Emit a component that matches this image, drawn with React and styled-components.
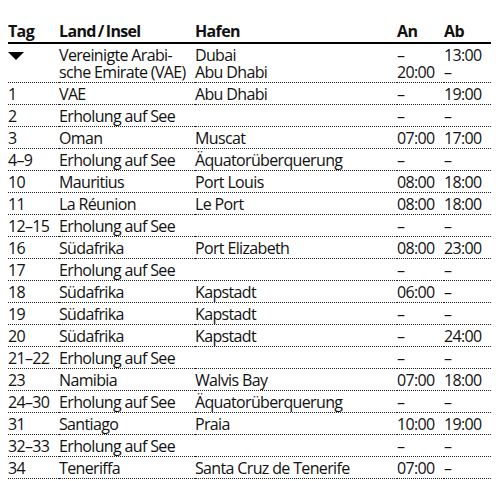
import React from "react";
import styled, { createGlobalStyle } from "styled-components";

const GlobalStyle = createGlobalStyle`
  body {
    margin: 8px;
    background: #fff;
  }
`;

const Table = styled.table`
  width: 483px;
  border-collapse: collapse;
  table-layout: fixed;
  font-family: "Open Sans", "Noto Sans", sans-serif;
  font-size: 16px;
  letter-spacing: -0.65px;
  color: #111;
`;

const HeadCell = styled.th`
  text-align: left;
  font-weight: 700;
  line-height: 20px;
  padding: 13px 0 1px;
  border-bottom: 2px solid #000;
  white-space: nowrap;
`;

const Cell = styled.td`
  vertical-align: top;
  line-height: 17px;
  padding: 3px 0 1px;
  border-bottom: 1px dotted #222;
  white-space: nowrap;
`;

const Marker = styled.svg`
  display: block;
  margin-top: 5px;
`;

const rows = [
  ["1", "VAE", "Abu Dhabi", "–", "19:00"],
  ["2", "Erholung auf See", "", "–", "–"],
  ["3", "Oman", "Muscat", "07:00", "17:00"],
  ["4–9", "Erholung auf See", "Äquatorüberquerung", "–", "–"],
  ["10", "Mauritius", "Port Louis", "08:00", "18:00"],
  ["11", "La Réunion", "Le Port", "08:00", "18:00"],
  ["12–15", "Erholung auf See", "", "–", "–"],
  ["16", "Südafrika", "Port Elizabeth", "08:00", "23:00"],
  ["17", "Erholung auf See", "", "–", "–"],
  ["18", "Südafrika", "Kapstadt", "06:00", "–"],
  ["19", "Südafrika", "Kapstadt", "–", "–"],
  ["20", "Südafrika", "Kapstadt", "–", "24:00"],
  ["21–22", "Erholung auf See", "", "–", "–"],
  ["23", "Namibia", "Walvis Bay", "07:00", "18:00"],
  ["24–30", "Erholung auf See", "Äquatorüberquerung", "–", "–"],
  ["31", "Santiago", "Praia", "10:00", "19:00"],
  ["32–33", "Erholung auf See", "", "–", "–"],
  ["34", "Teneriffa", "Santa Cruz de Tenerife", "07:00", "–"],
];

const App = () => {
  return (
    <>
      <GlobalStyle />
      <Table>
        <colgroup>
          <col style={{ width: 51 }} />
          <col style={{ width: 136 }} />
          <col style={{ width: 202 }} />
          <col style={{ width: 47 }} />
          <col style={{ width: 47 }} />
        </colgroup>
        <thead>
          <tr>
            <HeadCell>Tag</HeadCell>
            <HeadCell>Land{"\u2009"}/{"\u2009"}Insel</HeadCell>
            <HeadCell>Hafen</HeadCell>
            <HeadCell>An</HeadCell>
            <HeadCell>Ab</HeadCell>
          </tr>
        </thead>
        <tbody>
          <tr>
            <Cell>
              <Marker width="16" height="8" viewBox="0 0 16 8">
                <polygon points="0,0 16,0 8,8" fill="#000" />
              </Marker>
            </Cell>
            <Cell>
              Vereinigte Arabi-
              <br />
              sche Emirate (VAE)
            </Cell>
            <Cell>
              Dubai
              <br />
              Abu Dhabi
            </Cell>
            <Cell>
              –
              <br />
              20:00
            </Cell>
            <Cell>
              13:00
              <br />–
            </Cell>
          </tr>
          {rows.map((r) => (
            <tr key={r[0]}>
              {r.map((c, i) => (
                <Cell key={i}>{c}</Cell>
              ))}
            </tr>
          ))}
        </tbody>
      </Table>
    </>
  );
};

export default App;
